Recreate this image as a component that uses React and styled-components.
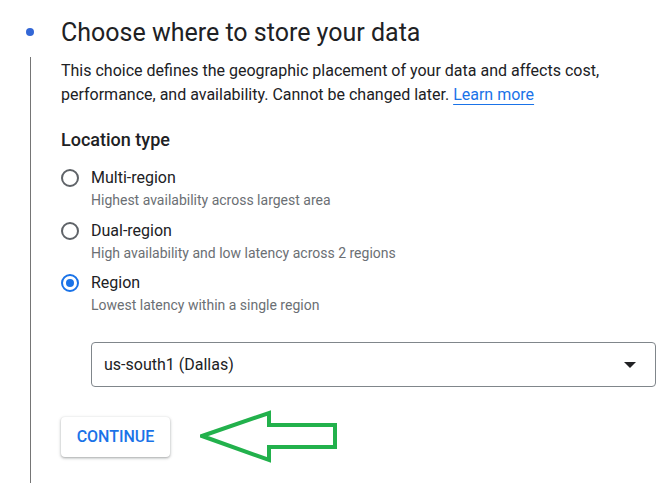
import React from "react";
import styled, { createGlobalStyle } from "styled-components";

const Global = createGlobalStyle`
  html, body { margin: 0; padding: 0; background: #fff; }
  body { font-family: Roboto, "Noto Sans", Arial, sans-serif; overflow: hidden; }
  * { box-sizing: border-box; }
`;

const Step = styled.div`
  display: grid;
  grid-template-columns: 61px 1fr;
  grid-template-rows: 32px 1fr;
  min-height: 100vh;
  padding: 17px 12px 0 0;
`;

const DotCell = styled.div`
  display: flex;
  align-items: center;
`;

const Dot = styled.span`
  width: 8px;
  height: 8px;
  margin-left: 26px;
  margin-top: -2px;
  border-radius: 50%;
  background: #3367d6;
`;

const Title = styled.h2`
  margin: 0;
  font-size: 25px;
  line-height: 32px;
  font-weight: 400;
  color: #202124;
`;

const Rail = styled.div`
  margin: 8px 0 0 30px;
  width: 1px;
  background: #757575;
`;

const Body = styled.div`
  padding-top: 10px;
  display: flex;
  flex-direction: column;
`;

const Desc = styled.p`
  margin: 0;
  font-size: 16px;
  line-height: 24px;
  color: #202124;
`;

const Link = styled.a`
  color: #1a73e8;
  text-decoration: underline;
  text-underline-offset: 4px;
  text-decoration-thickness: 1px;
`;

const SectionTitle = styled.h3`
  margin: 21px 0 14px;
  font-size: 18px;
  line-height: 24px;
  font-weight: 500;
  color: #202124;
`;

const RadioList = styled.div`
  display: flex;
  flex-direction: column;
  gap: 8.5px;
`;

const Option = styled.label`
  display: grid;
  grid-template-columns: 18px 1fr;
  column-gap: 12px;
  align-items: center;
`;

const Circle = styled.span`
  width: 18px;
  height: 18px;
  border-radius: 50%;
  border: 2px solid ${(p) => (p.$checked ? "#1a73e8" : "#5f6368")};
  display: flex;
  align-items: center;
  justify-content: center;
  &::after {
    content: "";
    width: 8px;
    height: 8px;
    border-radius: 50%;
    background: #1a73e8;
    display: ${(p) => (p.$checked ? "block" : "none")};
  }
`;

const OptLabel = styled.span`
  font-size: 16px;
  line-height: 24px;
  color: #202124;
`;

const OptSub = styled.span`
  grid-column: 2;
  font-size: 14px;
  line-height: 20px;
  color: #6b6f74;
`;

const Select = styled.div`
  margin: 27px 0 0 30px;
  height: 45px;
  border: 1px solid #80868b;
  border-radius: 4px;
  display: flex;
  align-items: center;
  justify-content: space-between;
  padding: 0 19px 0 12px;
  font-size: 16px;
  color: #202124;
`;

const Caret = styled.span`
  width: 0;
  height: 0;
  border-left: 6px solid transparent;
  border-right: 6px solid transparent;
  border-top: 6px solid #202124;
`;

const ActionRow = styled.div`
  margin-top: 23px;
  display: flex;
  align-items: center;
  gap: 30px;
`;

const Button = styled.button`
  height: 40px;
  width: 109px;
  border: none;
  border-radius: 4px;
  background: #fff;
  box-shadow: 0 1px 2px rgba(60, 64, 67, 0.3), 0 1px 3px 1px rgba(60, 64, 67, 0.15);
  font-family: Roboto, Arial, sans-serif;
  font-size: 16px;
  font-weight: 500;
  letter-spacing: 0;
  color: #1a73e8;
  text-transform: uppercase;
  padding: 0;
`;

const options = [
  { label: "Multi-region", sub: "Highest availability across largest area" },
  { label: "Dual-region", sub: "High availability and low latency across 2 regions" },
  { label: "Region", sub: "Lowest latency within a single region", checked: true },
];

export default function App() {
  return (
    <>
      <Global />
      <Step>
        <DotCell>
          <Dot />
        </DotCell>
        <Title>Choose where to store your data</Title>
        <Rail />
        <Body>
          <Desc>
            This choice defines the geographic placement of your data and affects cost,
            performance, and availability. Cannot be changed later. <Link>Learn more</Link>
          </Desc>
          <SectionTitle>Location type</SectionTitle>
          <RadioList>
            {options.map((o) => (
              <Option key={o.label}>
                <Circle $checked={o.checked} />
                <OptLabel>{o.label}</OptLabel>
                <OptSub>{o.sub}</OptSub>
              </Option>
            ))}
          </RadioList>
          <Select>
            <span>us-south1 (Dallas)</span>
            <Caret />
          </Select>
          <ActionRow>
            <Button>Continue</Button>
            <svg width="138" height="53" viewBox="0 0 138 53">
              <path
                d="M2 26 L69 3 L69 15 L135 15 L135 37 L69 37 L69 50 Z"
                fill="none"
                stroke="#22b14c"
                strokeWidth="4"
                strokeLinejoin="miter"
              />
            </svg>
          </ActionRow>
        </Body>
      </Step>
    </>
  );
}
